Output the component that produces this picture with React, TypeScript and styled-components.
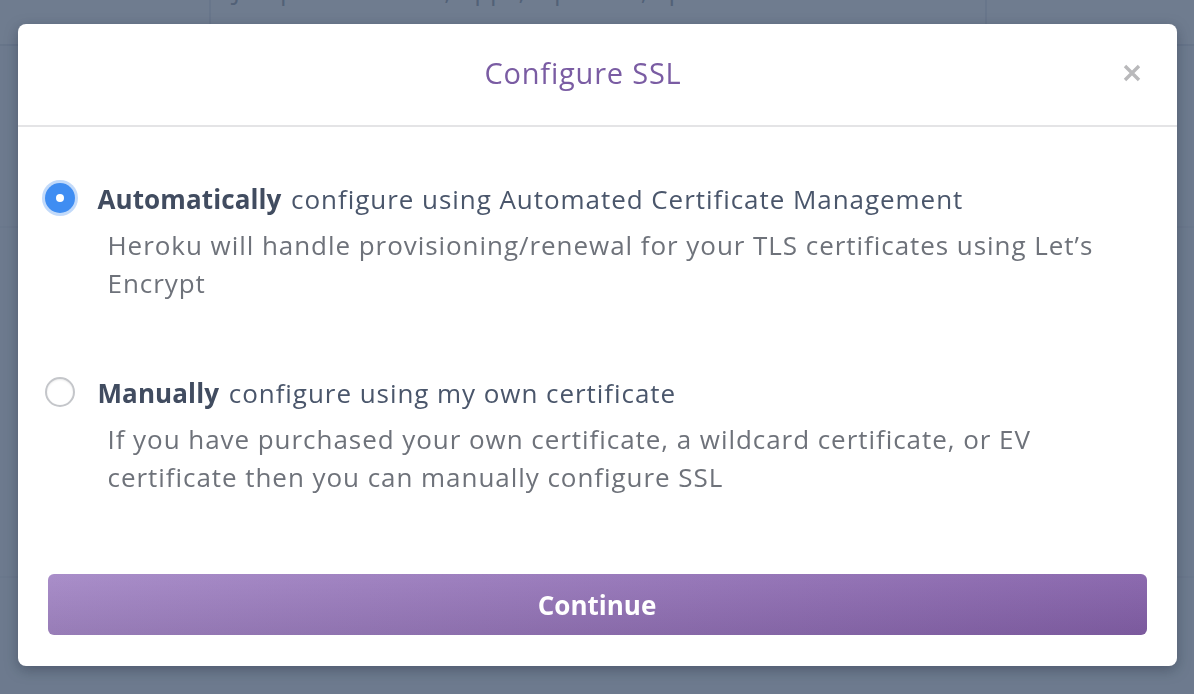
import React, { useState } from "react";
import styled, { createGlobalStyle } from "styled-components";

const Global = createGlobalStyle`
  html, body { margin: 0; padding: 0; height: 100%; }
  body {
    font-family: "Open Sans", "Noto Sans", "Liberation Sans", sans-serif;
    background: #ffffff;
    overflow: hidden;
  }
  * { box-sizing: border-box; }
`;

const Page = styled.div`
  width: 1194px;
  height: 694px;
  background: #f7f8fb;
`;

const TopBar = styled.div`
  height: 46px;
  border-bottom: 2px solid #dde1e8;
  background: #ffffff;
  display: flex;
  padding-left: 209px;
`;

const SearchBox = styled.div`
  width: 778px;
  height: 44px;
  border-left: 2px solid #e4e7ed;
  border-right: 2px solid #e4e7ed;
  padding-left: 22px;
  display: flex;
  align-items: flex-start;
  overflow: hidden;
`;

const SearchText = styled.span`
  font-size: 26px;
  line-height: 30px;
  color: #8b93a1;
  margin-top: -25px;
  white-space: nowrap;
`;

const PageRow = styled.div<{ $h: number }>`
  height: ${(p) => p.$h}px;
  border-bottom: 2px solid #eceef2;
`;

const Overlay = styled.div`
  position: fixed;
  inset: 0;
  background: rgba(63, 80, 106, 0.75);
  display: flex;
  justify-content: center;
  align-items: flex-start;
  padding-top: 24px;
`;

const Modal = styled.div`
  width: 1159px;
  background: #ffffff;
  border-radius: 8px;
  box-shadow: 0 4px 14px rgba(20, 30, 50, 0.35);
  overflow: hidden;
`;

const Header = styled.div`
  position: relative;
  height: 103px;
  border-bottom: 2px solid #e4e4e6;
  display: flex;
  align-items: center;
  justify-content: center;
`;

const Title = styled.h2`
  margin: -5px 28px 0 0;
  font-family: "Open Sans", "Noto Sans", sans-serif;
  font-weight: 400;
  font-size: 29px;
  letter-spacing: 0.8px;
  color: #7a5ca3;
`;

const Close = styled.button`
  position: absolute;
  right: 30px;
  top: 34px;
  width: 30px;
  height: 30px;
  border: none;
  background: transparent;
  padding: 0;
  cursor: pointer;
  display: flex;
  align-items: center;
  justify-content: center;
`;

const Body = styled.div`
  padding: 54px 30px 31px 27px;
  display: flex;
  flex-direction: column;
`;

const Option = styled.label`
  display: grid;
  grid-template-columns: 30px 1fr;
  column-gap: 23px;
  cursor: pointer;
  & + & {
    margin-top: 73px;
  }
`;

const RadioDot = styled.span<{ $checked: boolean }>`
  width: 30px;
  height: 30px;
  margin-top: 2px;
  border-radius: 50%;
  display: flex;
  align-items: center;
  justify-content: center;
  background: ${(p) => (p.$checked ? "#3f8df2" : "#ffffff")};
  border: ${(p) => (p.$checked ? "none" : "2px solid #c4c6ca")};
  box-shadow: ${(p) =>
    p.$checked
      ? "0 0 0 3px rgba(80, 150, 240, 0.35)"
      : "inset 0 1px 2px rgba(0,0,0,0.08)"};
  &::after {
    content: "";
    width: 8px;
    height: 8px;
    border-radius: 50%;
    background: #ffffff;
    display: ${(p) => (p.$checked ? "block" : "none")};
  }
`;

const OptionText = styled.div`
  display: flex;
  flex-direction: column;
`;

const Label = styled.div`
  font-size: 26px;
  line-height: 36px;
  letter-spacing: 0.95px;
  color: #4a566b;
  & b {
    font-weight: 700;
    letter-spacing: 0.1px;
    color: #414c60;
    margin-right: 2px;
  }
`;

const Desc = styled.div`
  margin-top: 9px;
  padding-left: 10px;
  font-size: 26px;
  line-height: 38px;
  letter-spacing: 0.95px;
  color: #6e727a;
  padding-right: 40px;
`;

const ContinueButton = styled.button`
  margin-top: 78px;
  margin-left: 3px;
  height: 61px;
  border: none;
  border-radius: 6px;
  background: linear-gradient(180deg, rgba(255, 255, 255, 0.06), rgba(0, 0, 0, 0.08)),
    linear-gradient(90deg, #a487c6, #8561aa);
  color: #ffffff;
  font-family: "Open Sans", "Noto Sans", sans-serif;
  font-size: 26px;
  font-weight: 700;
  cursor: pointer;
`;

export default function App() {
  const [choice, setChoice] = useState<"auto" | "manual">("auto");
  return (
    <>
      <Global />
      <Page>
        <TopBar>
          <SearchBox>
            <SearchText>Jump to Favorites, Apps, Pipelines, Spaces…</SearchText>
          </SearchBox>
        </TopBar>
        <PageRow $h={182} />
        <PageRow $h={350} />
      </Page>
      <Overlay>
        <Modal>
          <Header>
            <Title>Configure SSL</Title>
            <Close aria-label="Close">
              <svg width="20" height="20" viewBox="0 0 20 20">
                <path
                  d="M3 3 L17 17 M17 3 L3 17"
                  stroke="#b9b9bb"
                  strokeWidth="3.4"
                  strokeLinecap="butt"
                />
              </svg>
            </Close>
          </Header>
          <Body>
            <Option onClick={() => setChoice("auto")}>
              <RadioDot $checked={choice === "auto"} />
              <OptionText>
                <Label>
                  <b>Automatically</b> configure using Automated Certificate Management
                </Label>
                <Desc>
                  Heroku will handle provisioning/renewal for your TLS certificates using Let’s
                  Encrypt
                </Desc>
              </OptionText>
            </Option>
            <Option onClick={() => setChoice("manual")}>
              <RadioDot $checked={choice === "manual"} />
              <OptionText>
                <Label>
                  <b>Manually</b> configure using my own certificate
                </Label>
                <Desc>
                  If you have purchased your own certificate, a wildcard certificate, or EV
                  certificate then you can manually configure SSL
                </Desc>
              </OptionText>
            </Option>
            <ContinueButton>Continue</ContinueButton>
          </Body>
        </Modal>
      </Overlay>
    </>
  );
}
